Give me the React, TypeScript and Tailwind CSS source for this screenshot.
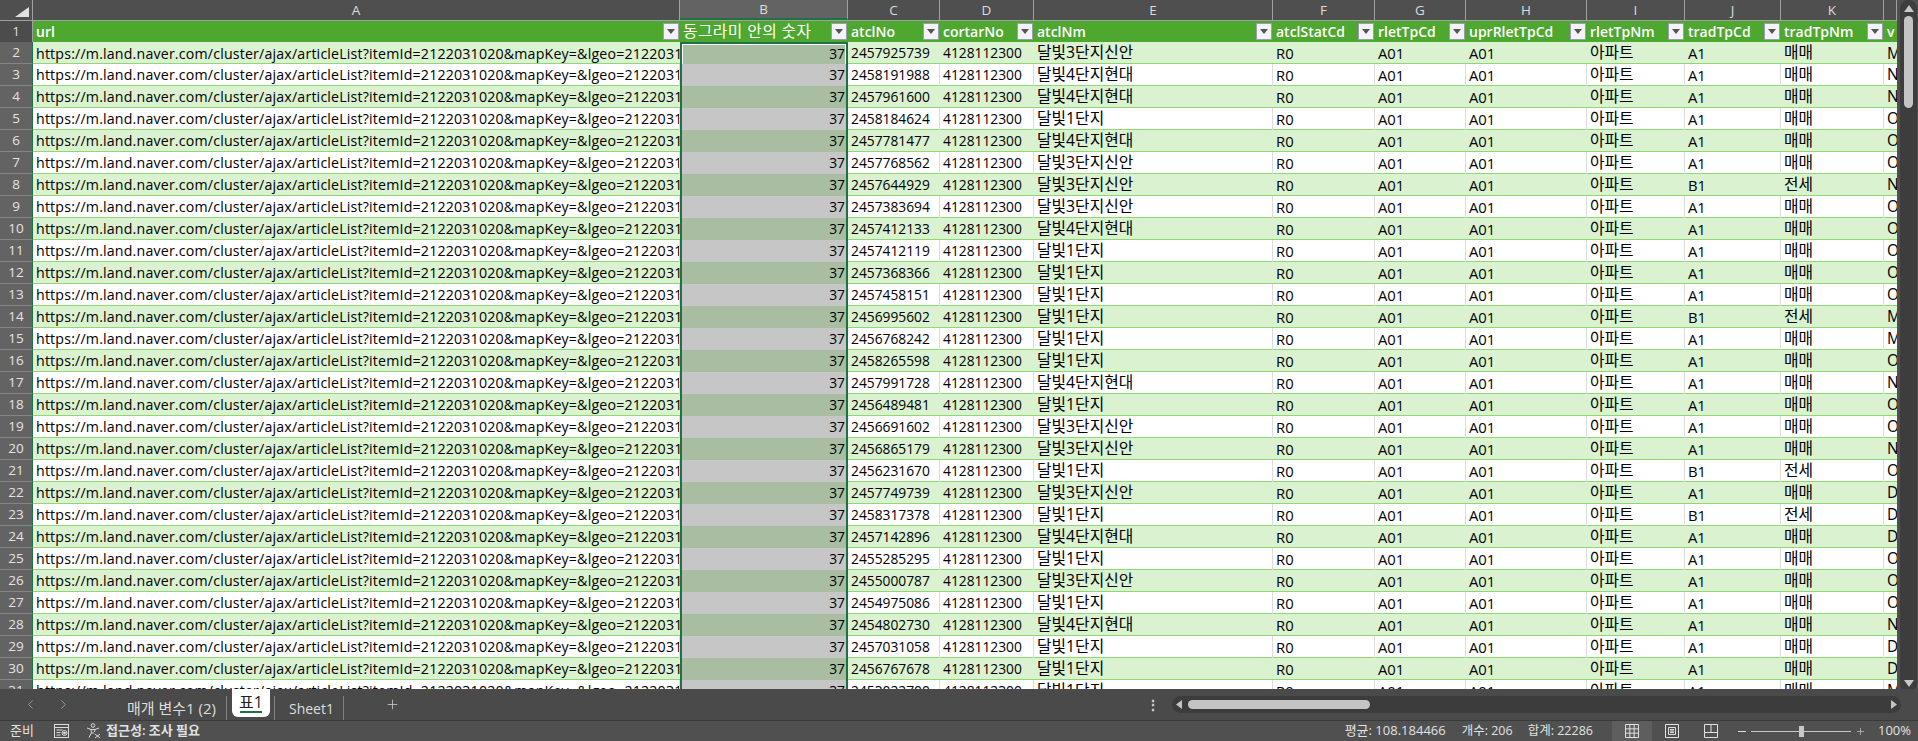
import React from 'react';
import { ChevronLeft, ChevronRight, Plus } from 'lucide-react';

const url = 'https://m.land.naver.com/cluster/ajax/articleList?itemId=2122031020&mapKey=&lgeo=2122031';

const cols = 'grid grid-cols-[33px_647px_168px_92px_94px_239px_102px_91px_121px_98px_96px_103px_13px]';

const letters = ['A', 'B', 'C', 'D', 'E', 'F', 'G', 'H', 'I', 'J', 'K', ''];

const headers = [
  'url',
  '동그라미 안의 숫자',
  'atclNo',
  'cortarNo',
  'atclNm',
  'atclStatCd',
  'rletTpCd',
  'uprRletTpCd',
  'rletTpNm',
  'tradTpCd',
  'tradTpNm',
  'v',
];

const N1 = '달빛1단지';
const N3 = '달빛3단지신안';
const N4 = '달빛4단지현대';

// atclNo, atclNm, jeonse?, first letter of the cut off column
const rows: [string, string, boolean, string][] = [
  ['2457925739', N3, false, 'M'],
  ['2458191988', N4, false, 'N'],
  ['2457961600', N4, false, 'N'],
  ['2458184624', N1, false, 'O'],
  ['2457781477', N4, false, 'O'],
  ['2457768562', N3, false, 'O'],
  ['2457644929', N3, true, 'N'],
  ['2457383694', N3, false, 'O'],
  ['2457412133', N4, false, 'O'],
  ['2457412119', N1, false, 'O'],
  ['2457368366', N1, false, 'O'],
  ['2457458151', N1, false, 'O'],
  ['2456995602', N1, true, 'M'],
  ['2456768242', N1, false, 'M'],
  ['2458265598', N1, false, 'O'],
  ['2457991728', N4, false, 'N'],
  ['2456489481', N1, false, 'O'],
  ['2456691602', N3, false, 'O'],
  ['2456865179', N3, false, 'N'],
  ['2456231670', N1, true, 'O'],
  ['2457749739', N3, false, 'D'],
  ['2458317378', N1, true, 'D'],
  ['2457142896', N4, false, 'D'],
  ['2455285295', N1, false, 'O'],
  ['2455000787', N3, false, 'O'],
  ['2454975086', N1, false, 'O'],
  ['2454802730', N4, false, 'N'],
  ['2457031058', N1, false, 'D'],
  ['2456767678', N1, false, 'D'],
  ['2453022700', N1, false, 'M'],
];

function FilterButton() {
  return (
    <div className="w-[16px] h-[17px] shrink-0 mr-[1px] flex items-center justify-center border border-[#9c9cac] bg-[#f3f3f9]">
      <svg width="8" height="5" viewBox="0 0 8 5">
        <path d="M0 0h8L4 5z" fill="#555" />
      </svg>
    </div>
  );
}

function Cell({ text, odd, size = '' }: { text: string; odd: boolean; size?: string }) {
  return (
    <div
      className={`h-full pl-[3px] overflow-hidden whitespace-nowrap flex items-center ${size} ${
        odd ? '' : 'border-r border-[#dcdcdc]'
      }`}
    >
      {text}
    </div>
  );
}

const KR = 'text-[15.8px] leading-none';
const ALPHA = 'text-[14.8px]';

function Row({ idx, row }: { idx: number; row: [string, string, boolean, string] }) {
  const band = idx % 2 === 0;
  const [no, name, jeonse, last] = row;
  return (
    <div className={`${cols} h-[22px] border-b border-[#8ed973] text-black text-[13.8px] ${band ? 'bg-[#daf2d0]' : 'bg-white'}`}>
      <div className="h-[22px] flex items-center justify-center bg-[#636363] text-[#e4e4e4] text-[13.5px] border-r border-[#1f7145] border-b-[1px] border-b-[#858585]">
        {idx + 2}
      </div>
      <Cell text={url} odd={band} size="text-[14.2px] tracking-[0.18px]" />
      <div
        className={`h-full flex items-center justify-end pr-[1px] border-x-2 border-[#1f7145] ${
          band ? 'bg-[#a9bda2]' : 'bg-[#c6c6c6]'
        } ${idx === 0 ? 'border-t-2 shadow-[inset_0_0_0_1px_#ffffff]' : ''}`}
      >
        37
      </div>
      <Cell text={no} odd={band} />
      <Cell text="4128112300" odd={band} />
      <Cell text={name} odd={band} size={KR} />
      <Cell text="R0" odd={band} size={ALPHA} />
      <Cell text="A01" odd={band} size={ALPHA} />
      <Cell text="A01" odd={band} size={ALPHA} />
      <Cell text="아파트" odd={band} size={KR} />
      <Cell text={jeonse ? 'B1' : 'A1'} odd={band} size={ALPHA} />
      <Cell text={jeonse ? '전세' : '매매'} odd={band} size={KR} />
      <Cell text={last} odd={true} size="text-[15.5px]" />
    </div>
  );
}

function VerticalScrollbar() {
  return (
    <div className="w-[21px] h-full bg-[#4f4f4f] pl-[3px] pr-[1px]">
      <div className="h-[692px] bg-[#3d3d3d] rounded-full flex flex-col items-center pt-[5px]">
        <svg width="10" height="7" viewBox="0 0 10 7">
          <path d="M5 0l5 7H0z" fill="#c8c8c8" />
        </svg>
        <div className="w-[9px] h-[92px] mt-[4px] rounded-full bg-[#c4c4c4]" />
        <div className="flex-1" />
        <svg width="10" height="7" viewBox="0 0 10 7" className="mb-[5px]">
          <path d="M0 0h10L5 7z" fill="#c8c8c8" />
        </svg>
      </div>
    </div>
  );
}

function SheetTabs() {
  return (
    <div className="h-[31px] flex items-start bg-[#4a4a4a] text-[14px] text-[#dedede] shrink-0">
      <div className="w-[127px] h-full flex items-center pl-[23px] gap-[18px] text-[#a0a0a0]">
        <ChevronLeft size={15} strokeWidth={1.5} />
        <ChevronRight size={15} strokeWidth={1.5} />
      </div>
      <div className="w-[100px] h-[24px] mt-[7px] flex items-center border-r border-[#808080] text-[15px]">매개 변수1 (2)</div>
      <div className="w-[38px] h-[28px] ml-[5px] bg-white rounded-b-[6px] flex flex-col items-center justify-center text-[#222]">
        <span className="leading-[18px] text-[16px]">표1</span>
        <div className="w-[22px] h-[2px] bg-[#1f7145]" />
      </div>
      <div className="w-[70px] h-[24px] ml-[4px] mt-[7px] flex items-center pl-[14px] border-x border-[#808080]">Sheet1</div>
      <div className="w-[56px] h-full flex items-center justify-end text-[#d0d0d0]">
        <Plus size={15} strokeWidth={1.25} />
      </div>
      <div className="w-[760px] h-full flex items-center justify-end pt-[1px]">
        <span className="text-[#cfcfcf] text-[14px] leading-none font-bold">⋮</span>
      </div>
      <div className="w-[729px] h-[17px] ml-[12px] mt-[7px] bg-[#3c3c3c] rounded-full flex items-center pl-[4px] pr-[4px]">
        <svg width="6" height="9" viewBox="0 0 6 9">
          <path d="M6 0v9L0 4.500z" fill="#c4c4c4" />
        </svg>
        <div className="w-[182px] h-[9px] ml-[6px] rounded-full bg-[#c4c4c4]" />
        <div className="flex-1" />
        <svg width="6" height="9" viewBox="0 0 6 9">
          <path d="M0 0v9l6-4.500z" fill="#c4c4c4" />
        </svg>
      </div>
    </div>
  );
}

function StatusBar() {
  return (
    <div className="h-[21px] flex items-center justify-between whitespace-nowrap border-t border-[#3a3a3a] bg-[#505050] text-[13px] text-[#e2e2e2] shrink-0">
      <div className="h-full flex items-center">
        <span className="ml-[10px] w-[44px]">준비</span>
        <svg width="15" height="14" viewBox="0 0 15 14" fill="none" stroke="#dcdcdc">
          <rect x="0.500" y="0.500" width="14" height="13" />
          <path d="M0.500 3.500h14M2.500 6h6M2.500 8.500h4M2.500 11h4" />
          <circle cx="10.500" cy="9" r="2.500" />
          <circle cx="10.500" cy="9" r="1" fill="#dcdcdc" />
        </svg>
        <svg width="16" height="16" viewBox="0 0 16 16" fill="none" stroke="#dcdcdc" className="ml-[17px]">
          <circle cx="7" cy="2.500" r="1.800" />
          <path d="M1 5l4 1.500h4L13 5M5 6.500l.5 3L3 14.500M9 6.500l-.5 2.500M9 11l5 4M14 11l-5 4M5.500 10H8" />
        </svg>
        <span className="ml-[4px] font-semibold">접근성: 조사 필요</span>
      </div>
      <div className="h-full flex items-center pr-[7px]">
        <span>평균: 108.184466</span>
        <span className="ml-[16px] text-[12.5px]">개수: 206</span>
        <span className="ml-[15px] text-[12.5px]">합계: 22286</span>
        <div className="w-[40px] h-full ml-[19px] bg-[#5e5e5e] flex items-center justify-center">
          <svg width="14" height="14" viewBox="0 0 14 14" fill="none" stroke="#e0e0e0">
            <path d="M0.500 0.500h13v13h-13zM0.500 4.830h13M0.500 9.170h13M4.830 0.500v13M9.170 0.500v13" />
          </svg>
        </div>
        <svg width="14" height="14" viewBox="0 0 14 14" fill="none" stroke="#e0e0e0" className="ml-[13px]">
          <path d="M0.500 0.500h13v13h-13zM3.500 3.500h7v7h-7zM5 5.500h4M5 7h4M5 8.500h4" />
        </svg>
        <svg width="14" height="14" viewBox="0 0 14 14" fill="none" stroke="#e0e0e0" className="ml-[25px]">
          <path d="M0.500 0.500h13v13h-13zM0.500 8.500h6.500v-8M7 8.500h6.500" />
        </svg>
        <span className="w-[8px] h-[1px] ml-[20px] bg-[#e0e0e0]" />
        <div className="w-[100px] h-[11px] ml-[5px] flex items-center relative">
          <div className="w-full h-[1px] bg-[#c8c8c8]" />
          <div className="absolute left-[48px] w-[5px] h-[11px] bg-[#c8c8c8]" />
        </div>
        <Plus size={11} strokeWidth={1.25} className="ml-[4px] text-[#e0e0e0]" />
        <span className="ml-[12px]">100%</span>
      </div>
    </div>
  );
}

export default function App() {
  return (
    <div className="w-[1918px] h-[741px] overflow-hidden flex flex-col bg-[#4f4f4f] font-['Open_Sans','Noto_Sans_CJK_KR',sans-serif]">
      <div className="h-[689px] flex shrink-0">
        <div className="w-[1897px] h-[689px] overflow-hidden">
          {/* column letters */}
          <div className={`${cols} h-[21px] bg-[#4f4f4f] border-b border-[#a0a0a0] text-[13.5px] text-[#dcdcdc]`}>
            <div className="h-[20px] flex justify-end items-end pb-[3px] pr-[3px] border-r border-[#a0a0a0]">
              <svg width="14" height="10" viewBox="0 0 14 10">
                <path d="M14 0v10H0z" fill="#e0e0e0" />
              </svg>
            </div>
            {letters.map((l, i) => (
              <div
                key={i}
                className={`h-[20px] flex items-center justify-center border-r border-[#a0a0a0] ${
                  i === 1 ? 'bg-[#636363] border-b-2 border-b-[#1f7145]' : ''
                }`}
              >
                {l}
              </div>
            ))}
          </div>
          {/* table header */}
          <div className={`${cols} h-[21px] bg-[#4ea72e] text-white font-semibold text-[14px]`}>
            <div className="flex items-center justify-center bg-[#4c4c4c] text-[#dcdcdc] text-[13.5px] font-normal border-r border-[#a0a0a0]">1</div>
            {headers.map((h, i) => (
              <div key={i} className="h-[21px] overflow-hidden whitespace-nowrap pl-[3px] flex items-center justify-between">
                <span className={i === 1 ? 'text-[15.8px] font-normal tracking-[0.4px]' : ''}>{h}</span>
                {i < 11 && <FilterButton />}
              </div>
            ))}
          </div>
          {rows.map((r, i) => (
            <Row key={r[0]} idx={i} row={r} />
          ))}
        </div>
        <VerticalScrollbar />
      </div>
      <SheetTabs />
      <StatusBar />
    </div>
  );
}
